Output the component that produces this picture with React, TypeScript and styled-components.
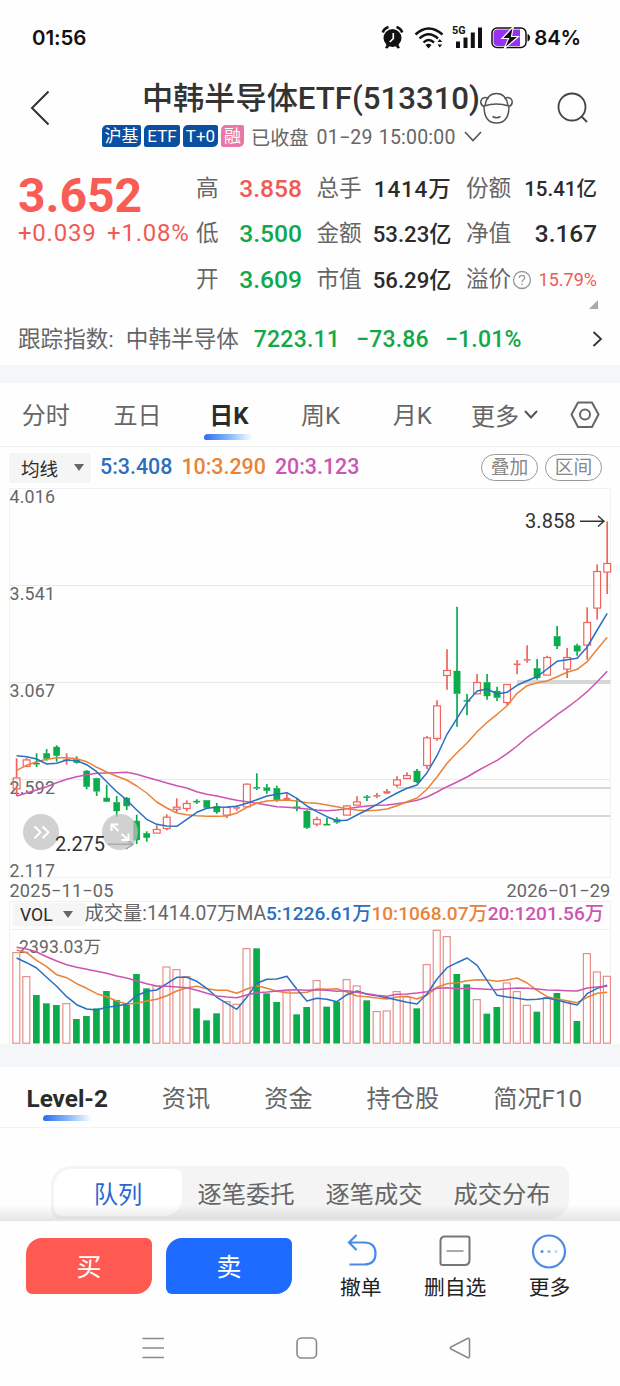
import React from "react";
import styled, { createGlobalStyle } from "styled-components";

const RED = "#ef5b54";
const GREEN = "#12a84a";
const BLUE = "#2a6fc0";
const ORANGE = "#e8833a";
const PINK = "#cb55b0";
const GREY = "#666";
const DARK = "#2b2b2b";

const GlobalStyle = createGlobalStyle`
  * { box-sizing: border-box; }
  html, body { margin: 0; background: #fefefe; }
  body { font-family: Roboto, "Noto Sans CJK SC", sans-serif; color: ${DARK}; }
  button { font: inherit; color: inherit; border: 0; background: none; padding: 0; }
  svg { display: block; flex: none; overflow: visible; }
`;

const Screen = styled.div`
  width: 620px;
  height: 1386px;
  overflow: hidden;
  display: flex;
  flex-direction: column;
  white-space: nowrap;
`;

const StatusBar = styled.div`
  height: 74px;
  padding: 0 39px 0 32px;
  display: flex;
  align-items: center;
  justify-content: space-between;
  font: 600 20.5px Inter, sans-serif;
  color: #111;
`;
const Clock = styled.span`letter-spacing: -0.1px;`;
const StatusIcons = styled.div`display: flex; align-items: center;`;
const Battery = styled.span`margin-left: 4px; letter-spacing: -0.2px;`;

const Header = styled.header`
  height: 91px;
  padding-left: 30px;
  display: flex;
`;
const BackButton = styled.button`width: 72px; height: 68px; display: flex; align-items: center;`;
const HeaderCenter = styled.div`
  width: 378px;
  display: flex;
  flex-direction: column;
`;
const Title = styled.h1`
  margin: 0;
  height: 50px;
  line-height: 50px;
  font-size: 31.2px;
  font-weight: 500;
  text-align: right;
  color: #333;
`;
const SubTitle = styled.div`
  display: flex;
  align-items: center;
  height: 24px;
  gap: 3px;
  font-size: 19.5px;
  color: ${GREY};
`;
const Badge = styled.span<{ $w: number; $pink?: boolean }>`
  flex: none;
  width: ${(p) => p.$w}px;
  height: 21.5px;
  line-height: 22.5px;
  text-align: center;
  border-radius: 5px 2px 5px 2px;
  font-size: 17px;
  color: #fff;
  background: ${(p) => (p.$pink ? "#e778a7" : "#0b50a0")};
`;
const MarketState = styled.span`margin: 1px 5px 0 4px; font-size: 19.2px;`;
const MarketTime = styled.span`margin: 2px 5px 0 0; letter-spacing: 0.22px; word-spacing: 1px;`;
const HeaderActions = styled.div`display: flex; height: 68px; align-items: center; gap: 43px;`;

const Quote = styled.section`
  height: 200px;
  padding: 0 18px;
`;
const QuoteTop = styled.div`display: flex; height: 137px;`;
const PriceBlock = styled.div`width: 178px; padding-top: 7px; color: ${RED};`;
const Price = styled.div`
  height: 48px;
  line-height: 48px;
  font-size: 48px;
  font-weight: 700;
  color: #f95c54;
`;
const Change = styled.div`
  line-height: 26px;
  font-size: 24px;
  letter-spacing: 0.75px;
  word-spacing: 4px;
`;
const StatGrid = styled.div`
  flex: 1;
  display: grid;
  grid-template-columns: 106px 135px 131px;
  grid-template-rows: repeat(3, 45.6px);
  column-gap: 14.5px;
  margin-top: 1px;
`;
const Stat = styled.div`display: flex; align-items: center; justify-content: space-between;`;
const StatLabel = styled.span`
  display: flex;
  align-items: center;
  font-size: 22.6px;
  line-height: 30px;
  color: ${GREY};
`;
const StatValue = styled.span<{ $c?: string; $s?: number; $ls?: number; $w?: number }>`
  font-size: ${(p) => p.$s ?? 22}px;
  line-height: 30px;
  font-weight: ${(p) => p.$w ?? 500};
  letter-spacing: ${(p) => p.$ls ?? 0}px;
  color: ${(p) => p.$c ?? DARK};
`;
const Corner = styled.div`
  height: 9px;
  margin: -2px 4px 0 auto;
  width: 9px;
  border-style: solid;
  border-width: 0 0 9px 9px;
  border-color: transparent transparent #aaa transparent;
`;
const IndexRow = styled.div`
  height: 57px;
  display: flex;
  align-items: center;
  font-size: 22.6px;
  color: ${GREY};
`;
const IndexName = styled.span`margin: 0 15px 0 12px;`;
const IndexNum = styled.span`
  margin: 3px 16px 0 0;
  font-weight: 500;
  font-size: 23px;
  letter-spacing: 0.2px;
  color: ${GREEN};
`;
const IndexArrow = styled.span`margin: 3px -2px 0 auto;`;

const Divider = styled.div<{ $h: number }>`height: ${(p) => p.$h}px; background: #f4f6f8;`;

const PeriodTabs = styled.nav`
  height: 64px;
  display: flex;
  border-bottom: 1px solid #eceeef;
`;
const PeriodTab = styled.button<{ $active?: boolean }>`
  width: 91.6px;
  height: 64px;
  display: flex;
  flex-direction: column;
  align-items: center;
  padding-top: 16px;
  line-height: 34px;
  font-size: 24px;
  font-weight: ${(p) => (p.$active ? 700 : 400)};
  color: ${(p) => (p.$active ? DARK : GREY)};
`;
const Underline = styled.i<{ $up?: number }>`
  width: 49px;
  height: 6px;
  margin-top: ${(p) => 1 - (p.$up ?? 0)}px;
  border-radius: 4px 2px 2px 2px;
  background: linear-gradient(90deg, #2b6cf0, #8cc0f8 55%, #fff);
`;
const MoreTab = styled.button`
  margin-left: 13px;
  width: 99px;
  height: 62px;
  display: flex;
  align-items: center;
  gap: 5px;
  font-size: 24px;
  color: ${GREY};
`;

const MaRow = styled.div`
  height: 41px;
  padding: 0 18px 0 9px;
  display: flex;
  align-items: center;
`;
const Select = styled.button<{ $w: number; $h: number; $s: number; $pad?: number }>`
  width: ${(p) => p.$w}px;
  height: ${(p) => p.$h}px;
  display: flex;
  align-items: center;
  justify-content: space-between;
  padding: 0 7px 0 ${(p) => p.$pad ?? 12}px;
  border-radius: 2px;
  background: #f5f5f5;
  font-size: ${(p) => p.$s}px;
  color: ${DARK};
`;
const Triangle = styled.i<{ $r?: number }>`
  border: solid transparent;
  border-width: 7px 5.5px 0;
  border-top-color: #666;
  margin-right: ${(p) => p.$r ?? 0}px;
`;
const MaValue = styled.span<{ $c: string }>`
  margin: -2px 0 0 9px;
  font-size: 21.4px;
  font-weight: 500;
  color: ${(p) => p.$c};
`;
const Pills = styled.div`display: flex; gap: 7px; margin-left: auto;`;
const Pill = styled.button`
  width: 57px;
  height: 27px;
  line-height: 27px;
  border: 1px solid #999;
  border-radius: 14px;
  font-size: 18.8px;
  color: #888;
`;

const ChartBlock = styled.div`height: 390px;`;
const DateRow = styled.div`
  height: 23px;
  padding: 1px 9.5px 0;
  display: flex;
  justify-content: space-between;
  align-items: center;
  font-size: 18.2px;
  letter-spacing: 0.15px;
  color: ${GREY};
`;
const VolHeader = styled.div`
  height: 29px;
  margin: 0 9px;
  padding: 0 0 2px 3px;
  border: 1px solid #f0f0f0;
  display: flex;
  align-items: center;
  font-size: 19.3px;
  line-height: 24px;
  color: ${GREY};
`;
const VolTotal = styled.span`margin: -1px 0 0 -1.5px;`;
const VolAverage = styled.span<{ $c: string }>`
  margin-top: -1px;
  font-weight: 500;
  font-size: 19.1px;
  color: ${(p) => p.$c};
`;
const VolumeBlock = styled.div`height: 114px;`;

const InfoTabs = styled.nav`
  height: 61px;
  padding-left: 26.5px;
  display: flex;
  border-bottom: 1px solid #f2f2f2;
`;
const InfoTab = styled.button<{ $active?: boolean }>`
  margin-right: 54px;
  height: 60px;
  padding-top: 15px;
  line-height: 34px;
  display: flex;
  flex-direction: column;
  align-items: center;
  font-size: ${(p) => (p.$active ? 24.3 : 24.2)}px;
  font-weight: ${(p) => (p.$active ? 700 : 400)};
  color: ${(p) => (p.$active ? DARK : GREY)};
`;
const Panel = styled.section`
  position: relative;
  height: 93px;
  padding: 38px 51px 0;
  overflow: hidden;
`;
const Segments = styled.div`
  height: 53px;
  padding: 3px;
  display: flex;
  border-radius: 20px 9px 20px 9px;
  background: #f4f4f4;
`;
const Segment = styled.button<{ $active?: boolean }>`
  flex: 1;
  height: 47px;
  line-height: 51px;
  border-radius: 18px 8px 18px 8px;
  background: ${(p) => (p.$active ? "#fff" : "none")};
  color: ${(p) => (p.$active ? "#2a68d0" : GREY)};
  font-size: 24.3px;
`;
const PanelShade = styled.div`
  position: absolute;
  left: 0;
  right: 0;
  bottom: 0;
  height: 16px;
  background: linear-gradient(transparent, rgba(0, 0, 0, 0.1));
`;

const TradeBar = styled.footer`
  height: 89px;
  padding: 16.5px 0 0 26px;
  display: flex;
`;
const TradeButton = styled.button<{ $bg: string }>`
  width: 126px;
  height: 56.5px;
  margin-right: 14px;
  border-radius: 16px 6px 16px 6px;
  background: ${(p) => p.$bg};
  color: #fff;
  font-size: 25px;
  line-height: 60px;
`;
const Actions = styled.div`
  display: grid;
  grid-template-columns: repeat(3, 94.4px);
  margin: -4.5px 0 0 7.5px;
`;
const Action = styled.button`
  display: flex;
  flex-direction: column;
  align-items: center;
  gap: 5px;
  line-height: 28px;
  font-size: 20.8px;
  color: #222;
`;
const SystemNav = styled.div`
  height: 76px;
  padding: 0 149px 0 141px;
  display: flex;
  align-items: center;
  justify-content: space-between;
`;

/* Each candle: kind (h hollow red, r solid red, g green), body top, body bottom, high, low */
type Candle = [string, number, number, number, number];
const candles: Candle[] = [
  ["h", 777.7, 789, 758.3, 796], ["h", 759.7, 766.7, 757.7, 767], ["g", 763, 764.3, 753.3, 767],
  ["g", 753.3, 758.7, 749, 760.7], ["g", 747, 755.7, 745.3, 761.7], ["r", 759.6, 761, 753.3, 764.7],
  ["g", 759.7, 762.7, 756.3, 763.7], ["g", 771, 786.7, 770, 789.3], ["g", 778.3, 791.3, 777.7, 796],
  ["g", 798, 801.7, 784.7, 801.7], ["g", 802.3, 811, 796, 816.7], ["g", 798, 806, 797, 810],
  ["g", 821, 840, 814.7, 844], ["g", 833.3, 837.7, 831.3, 841.7], ["h", 829.3, 833.3, 825.3, 833.3],
  ["h", 817, 828.7, 814.3, 830.3], ["h", 807, 809.5, 798.3, 812], ["h", 803.3, 808.7, 800.3, 811.3],
  ["g", 801, 802.2, 799.3, 804], ["g", 800.3, 807.7, 800.3, 807.7], ["g", 806.3, 812, 803, 813.7],
  ["h", 807.3, 815.3, 807.3, 818], ["r", 807.3, 808.5, 805.3, 810.7], ["h", 784, 807, 783.5, 807],
  ["g", 787.2, 788.4, 773.3, 790], ["g", 787.7, 790.7, 784, 793.7], ["g", 788.3, 800.3, 785.7, 801.7],
  ["r", 798, 800, 793.7, 800.5], ["g", 806.7, 808.2, 798.3, 811.3], ["g", 811, 827.7, 810.3, 829],
  ["h", 819.3, 824.3, 816.7, 826.3], ["g", 824, 825.2, 818, 825.3], ["g", 819.3, 822.3, 817.3, 823.7],
  ["h", 805.7, 815.3, 805, 815.3], ["h", 801.7, 805.3, 796.3, 805.3], ["g", 796.6, 797.8, 795, 801],
  ["r", 795.2, 796.4, 793, 798], ["r", 791.3, 793.3, 789, 794], ["h", 779.7, 785.3, 776.3, 787.3],
  ["h", 775.3, 778.7, 772.3, 778.7], ["g", 771, 782, 769, 783.3], ["h", 737.7, 765.7, 736, 769],
  ["h", 705.7, 738.7, 700.3, 740.7], ["h", 670.3, 675.7, 649.3, 689.7], ["g", 671, 693.7, 606.7, 726.7],
  ["g", 700.2, 701.4, 694, 715.3], ["h", 682.3, 694, 674, 694], ["g", 682.3, 696, 674, 699.7],
  ["g", 691, 697.7, 686.7, 701], ["h", 684.3, 702.7, 684, 705.3], ["r", 663.8, 665, 660, 674.3],
  ["r", 659.2, 660.4, 645.3, 662.7], ["g", 668.3, 678, 659, 679.7], ["h", 657.3, 675.3, 655.7, 675.3],
  ["g", 636.3, 646, 626, 649], ["h", 657.3, 669.3, 648, 678], ["g", 645.7, 651.3, 643.7, 655.7],
  ["h", 622.3, 645.3, 607.3, 659.7], ["h", 571.3, 608.3, 564.3, 619.7], ["h", 563.3, 572.3, 521.3, 594],
];

const ma5 = [755.7, 756.7, 759, 764, 763.3, 760, 760.7, 764.7, 771.7, 781.7, 791.7, 800, 810, 819.3, 824.3, 826, 826.3, 819.3, 812.3, 808.3, 807.3, 807, 806.3, 803.3, 799.7, 796, 794.3, 792.7, 798.3, 806, 811.7, 816.7, 820.7, 820.3, 815, 810, 804.3, 798.3, 793, 788.2, 785, 772.7, 755.7, 734.3, 718.3, 702.3, 691, 689, 694, 692.3, 685.3, 680.7, 676.7, 669, 661.3, 659.7, 658.3, 647, 630, 613.3];
const ma10 = [770.3, 765.3, 761.7, 759.3, 757.7, 757.7, 758.7, 761.7, 767.3, 772, 776.3, 780, 786, 793, 802, 808, 813, 814.7, 815.7, 816.3, 816.3, 816, 813, 807.3, 803.3, 801, 800.3, 800, 801, 802.7, 803.3, 805, 806.7, 808.7, 810, 810.7, 810.3, 809, 805.7, 801.7, 798, 789.3, 777, 763.3, 752.7, 743, 731.7, 722.3, 714.3, 705.7, 693.3, 685.7, 682.7, 681, 676.7, 672.3, 669.3, 661.7, 649.3, 637.3];
const ma20 = [796, 793, 790, 786.7, 782.7, 779.3, 776.7, 774.7, 773.3, 773, 772.7, 772.3, 774.3, 777.3, 780, 783, 785.7, 788, 791.7, 794.3, 796, 798.3, 800.3, 801.7, 803.3, 805, 806.7, 807.3, 808, 809, 810, 810.7, 810, 808.7, 807.3, 806, 805.3, 805, 803.7, 802.3, 800.3, 797, 792, 786.7, 782, 777, 771, 765.7, 760.3, 753.7, 746, 737.3, 730, 722.3, 714.7, 707.7, 700, 691.7, 681.7, 671.3];

/* Volume series are stored in thirds of a pixel */
const volumes = [247, 319, 375, 400, 405, 400, 447, 438, 415, 363, 390, 403, 312, 355, 347, 290, 298, 319, 415, 451, 430, 394, 402, 235, 235, 370, 396, 362, 433, 411, 331, 410, 395, 328, 347, 391, 424, 422, 364, 380, 415, 283, 180, 199, 312, 343, 388, 431, 411, 338, 364, 405, 425, 382, 369, 396, 453, 250, 305, 318];
const vol5 = [264, 278, 294, 322, 349, 380, 404, 417, 420, 412, 408, 402, 377, 364, 360, 341, 322, 322, 334, 355, 382, 400, 418, 382, 340, 328, 327, 319, 358, 393, 385, 388, 395, 374, 363, 373, 377, 383, 390, 397, 402, 372, 327, 293, 278, 264, 286, 332, 376, 381, 385, 389, 388, 384, 390, 398, 405, 371, 355, 346];
const vol10 = [240, 248, 271, 290, 314, 323, 341, 355, 371, 380, 393, 402, 400, 393, 388, 377, 363, 353, 349, 356, 361, 361, 370, 357, 347, 355, 364, 368, 369, 367, 357, 358, 356, 366, 378, 380, 384, 387, 381, 379, 387, 375, 352, 341, 338, 332, 329, 330, 334, 330, 324, 339, 361, 380, 387, 392, 398, 382, 370, 367];
const vol20 = [232, 237, 246, 260, 273, 284, 292, 298, 304, 310, 318, 324, 333, 341, 348, 349, 351, 353, 361, 370, 378, 381, 383, 375, 368, 366, 363, 360, 359, 361, 359, 361, 364, 362, 367, 371, 376, 379, 373, 372, 369, 365, 355, 353, 356, 355, 356, 358, 359, 356, 354, 355, 357, 360, 361, 362, 363, 354, 351, 349];
const greenBars = new Set([2, 3, 4, 6, 7, 8, 9, 10, 11, 12, 13, 18, 19, 20, 24, 25, 26, 28, 29, 31, 32, 35, 40, 44, 45, 47, 48, 52, 54, 56]);

const cx = (i: number) => 16.6 + i * 10.01;
const line = (v: number[], f: (n: number) => number = (n) => n) =>
  v.map((y, i) => `${cx(i).toFixed(1)},${f(y).toFixed(1)}`).join(" ");

const Line = ({ points, color }: { points: string; color: string }) => (
  <polyline points={points} fill="none" stroke={color} strokeWidth={1.5} strokeLinejoin="round" />
);

const axis: [string, number][] = [["4.016", 503.3], ["3.541", 600], ["3.067", 696.7], ["2.592", 793.5], ["2.117", 877]];

function PriceChart() {
  return (
    <svg width="620" height="390" viewBox="0 488 620 390" fontFamily="Roboto, sans-serif">
      <path d="M9.5 488.5H610.5V877.5H9.5Z" fill="none" stroke="#f1f1f1" />
      <path d="M10 585.5H610M10 682.5H610M10 779.5H610" stroke="#e9e9e9" />
      <path d="M517 682H610.5" stroke="#d6d8d8" strokeWidth="4" />
      <path d="M397 788H610.5M360 816H610.5" stroke="#d6d8d8" strokeWidth="2" />
      <g fill={GREY} fontSize="17.8">
        {axis.map(([t, y]) => (
          <text key={t} x="9.5" y={y} textLength="45.5">{t}</text>
        ))}
      </g>
      {candles.map(([k, t, b, h, l], i) => {
        const x = cx(i);
        const c = k === "g" ? "#0bac4c" : "#f0645c";
        return (
          <g key={i} stroke={c} fill={k === "h" ? "none" : c}>
            {h < t && <path d={`M${x} ${h}V${t}`} strokeWidth="1.7" />}
            {l > b && <path d={`M${x} ${b}V${l}`} strokeWidth="1.7" />}
            {k === "h" ? (
              <rect x={x - 3.4} y={t + 0.2} width="6.8" height={Math.max(b - t - 0.4, 1)} strokeWidth="1.2" />
            ) : (
              <rect x={x - 3.2} y={t} width="6.4" height={b - t} strokeWidth="0.3" />
            )}
          </g>
        );
      })}
      <Line points={line(ma20)} color={PINK} />
      <Line points={line(ma10)} color={ORANGE} />
      <Line points={line(ma5)} color={BLUE} />
      <g fill="none" stroke="#333" strokeWidth="1.4">
        <path d="M580 521.3H604M598 516L604 521.3L598 526.6" />
        <path d="M108 844.3H132M126 839.5L133 844.3L126 849" stroke="#777" />
      </g>
      <text x="525" y="528" fontSize="20" textLength="50.5" fill="#333">3.858</text>
      <g fill="#bfbfbf" fillOpacity="0.72">
        <circle cx="41" cy="832" r="18" />
        <circle cx="120" cy="832" r="18" />
      </g>
      <text x="55" y="850.5" fontSize="20" textLength="50" fill="#333">2.275</text>
      <g fill="none" stroke="#fff" strokeWidth="2">
        <path d="M34.5 826.5L40.5 832.3L34.5 838.2M42.5 826.5L48.5 832.3L42.5 838.2" />
        <path d="M111.5 831V824.5H118.5M111.5 824.5L118.5 831M121.5 834L128.5 840M128.5 833.5V840H121.5" />
      </g>
    </svg>
  );
}

function VolumeChart() {
  const y = (n: number) => 870 + n / 3;
  return (
    <svg width="620" height="114" viewBox="0 930 620 114" fontFamily='Roboto, "Noto Sans CJK SC", sans-serif'>
      <path d="M9.5 930V1044M610.5 930V1044" stroke="#f1f1f1" />
      {volumes.map((v, i) => {
        const x = cx(i) - 0.4;
        return greenBars.has(i) ? (
          <rect key={i} x={x - 3.2} y={y(v)} width="6.7" height={1043.5 - y(v)} fill="#0bac4c" />
        ) : (
          <rect key={i} x={x - 3.4} y={y(v) + 0.3} width="7" height={1042.9 - y(v)} fill="none" stroke="#e58782" strokeWidth="1.1" />
        );
      })}
      <text x="19" y="953" fontSize="17.5" textLength="82" fill={GREY}>2393.03万</text>
      <Line points={line(vol10, y)} color={ORANGE} />
      <Line points={line(vol5, y)} color={BLUE} />
      <Line points={line(vol20, y)} color={PINK} />
    </svg>
  );
}

const StatusGlyphs = () => (
  <svg width="149" height="24" viewBox="0 0 149 24">
    <g fill="#111">
      <circle cx="11.5" cy="13" r="9" />
      <path d="M4 23L6 19L8.5 21L6.5 23.5ZM19 23L17 19L14.5 21L16.5 23.5Z" />
    </g>
    <path d="M1.8 7.5Q3.2 3.2 7.5 2M21.2 7.5Q19.8 3.2 15.5 2" fill="none" stroke="#111" strokeWidth="2.6" />
    <path d="M12.3 8V13.5L8.8 17" fill="none" stroke="#fff" strokeWidth="1.7" />
    <path d="M34.5 9.5Q47.5 -2.5 61.5 9.5M38.5 13.5Q47.5 5 57 13.5M42.5 17.5Q47.5 12.5 53 17.5" fill="none" stroke="#111" strokeWidth="2.4" />
    <path d="M44.5 20Q47.5 17.5 50.5 20L47.5 23.5ZM56.5 17L58.8 14L61.2 17ZM56.5 19.5L58.8 22.5L61.2 19.5Z" fill="#111" />
    <text x="71" y="9" fontSize="11" fontWeight="700" textLength="13.5" lengthAdjust="spacingAndGlyphs" fontFamily="Roboto, sans-serif" fill="#111">5G</text>
    <path d="M77 23V16.5M84.5 23V12.5M91.8 23V7.5M99 23V2.5" stroke="#111" strokeWidth="4" />
    <rect x="111" y="3" width="34" height="19.5" rx="5" fill="#fff" stroke="#111" strokeWidth="1.5" />
    <path d="M117 4.5H139V21H117Q112.5 21 112.5 17V8.5Q112.5 4.5 117 4.5Z" fill="#9b30f5" />
    <path d="M146.5 9Q149 9.5 149 12.8Q149 16 146.5 16.5Z" fill="#111" />
    <path d="M132.5 1.5L121 13.5H127.5L123 24L137.5 11.5H130.5Z" fill="#111" stroke="#fff" strokeWidth="1.2" />
  </svg>
);

const Chevron = ({ w, h, c = "#555", sw = 1.6 }: { w: number; h: number; c?: string; sw?: number }) => (
  <svg width={w} height={h} fill="none" stroke={c} strokeWidth={sw}>
    <path d={`M1 1L${w / 2} ${h - 1.5}L${w - 1} 1`} />
  </svg>
);

const maPairs: [string, string][] = [["5:3.408", BLUE], ["10:3.290", ORANGE], ["20:3.123", PINK]];

export default function App() {
  return (
    <Screen>
      <GlobalStyle />
      <StatusBar>
        <Clock>01:56</Clock>
        <StatusIcons>
          <StatusGlyphs />
          <Battery>84%</Battery>
        </StatusIcons>
      </StatusBar>

      <Header>
        <BackButton>
          <svg width="20" height="36" fill="none" stroke="#333" strokeWidth="2">
            <path d="M18.5 1.5L2 18L18.5 34.5" />
          </svg>
        </BackButton>
        <HeaderCenter>
          <Title>中韩半导体ETF(513310)</Title>
          <SubTitle>
            <Badge $w={39}>沪基</Badge>
            <Badge $w={36}>ETF</Badge>
            <Badge $w={35}>T+0</Badge>
            <Badge $w={23} $pink>融</Badge>
            <MarketState>已收盘</MarketState>
            <MarketTime>01−29 15:00:00</MarketTime>
            <Chevron w={18} h={11} />
          </SubTitle>
        </HeaderCenter>
        <HeaderActions>
          <svg width="34" height="34" fill="none" stroke="#555" strokeWidth="1.5">
            <path d="M4 15Q4 32 16.5 32Q29 32 29 15M4 15Q16.5 11 29 15M5 14.5Q7 2.5 16.5 2.5Q26 2.5 28 14.5M12.5 25.5Q16.5 28 20.5 25.5" />
            <path d="M4 15.5Q0 14 1 9.5Q3 5 8.5 7.5M29 15.5Q33 14 32 9.5Q30 5 24.5 7.5" />
          </svg>
          <svg width="32" height="32" fill="none" stroke="#444" strokeWidth="1.8">
            <circle cx="15" cy="15" r="13.5" />
            <path d="M24.5 24.5L30 30" />
          </svg>
        </HeaderActions>
      </Header>

      <Quote>
        <QuoteTop>
          <PriceBlock>
            <Price>3.652</Price>
            <Change>+0.039 +1.08%</Change>
          </PriceBlock>
          <StatGrid>
            <Stat><StatLabel>高</StatLabel><StatValue $c={RED} $s={24.6}>3.858</StatValue></Stat>
            <Stat><StatLabel>总手</StatLabel><StatValue $s={22.5} $ls={0.8}>1414万</StatValue></Stat>
            <Stat><StatLabel>份额</StatLabel><StatValue $s={20.5}>15.41亿</StatValue></Stat>
            <Stat><StatLabel>低</StatLabel><StatValue $c={GREEN} $s={24.6}>3.500</StatValue></Stat>
            <Stat><StatLabel>金额</StatLabel><StatValue $s={22.2}>53.23亿</StatValue></Stat>
            <Stat><StatLabel>净值</StatLabel><StatValue $s={24.4}>3.167</StatValue></Stat>
            <Stat><StatLabel>开</StatLabel><StatValue $c={GREEN} $s={24.6}>3.609</StatValue></Stat>
            <Stat><StatLabel>市值</StatLabel><StatValue $s={22.2}>56.29亿</StatValue></Stat>
            <Stat>
              <StatLabel>
                溢价
                <svg width="20" height="20" fill="none" stroke="#999" strokeWidth="1.3">
                  <circle cx="11" cy="10" r="8.5" />
                  <path d="M8.3 8Q8.5 5.3 11 5.3Q13.7 5.3 13.7 7.8Q13.7 9 12.2 10Q11 10.8 11 12.3M11 13.5V15" />
                </svg>
              </StatLabel>
              <StatValue $c={RED} $s={18} $w={400}>15.79%</StatValue>
            </Stat>
          </StatGrid>
        </QuoteTop>
        <Corner />
        <IndexRow>
          跟踪指数:
          <IndexName>中韩半导体</IndexName>
          <IndexNum>7223.11</IndexNum>
          <IndexNum>−73.86</IndexNum>
          <IndexNum>−1.01%</IndexNum>
          <IndexArrow>
            <svg width="12" height="16" fill="none" stroke="#333" strokeWidth="1.8">
              <path d="M1.5 1L9 8L1.5 15" />
            </svg>
          </IndexArrow>
        </IndexRow>
      </Quote>

      <Divider $h={18} />
      <PeriodTabs>
        <PeriodTab>分时</PeriodTab>
        <PeriodTab>五日</PeriodTab>
        <PeriodTab $active>日K<Underline /></PeriodTab>
        <PeriodTab>周K</PeriodTab>
        <PeriodTab>月K</PeriodTab>
        <MoreTab>更多<Chevron w={14} h={9} sw={2} /></MoreTab>
        <svg width="30" height="63" fill="none" stroke="#666" strokeWidth="2">
          <path d="M8 19.5H22L28.5 31.5L22 44H8L1.5 31.5Z" strokeLinejoin="round" />
          <circle cx="15" cy="31.5" r="5" />
        </svg>
      </PeriodTabs>

      <MaRow>
        <Select $w={82} $h={30} $s={18.6}>均线<Triangle /></Select>
        {maPairs.map(([t, c]) => <MaValue key={t} $c={c}>{t}</MaValue>)}
        <Pills><Pill>叠加</Pill><Pill>区间</Pill></Pills>
      </MaRow>
      <ChartBlock><PriceChart /></ChartBlock>
      <DateRow><span>2025−11−05</span><span>2026−01−29</span></DateRow>
      <VolHeader>
        <Select $w={73} $h={23} $s={17.6} $pad={7}>VOL<Triangle $r={6} /></Select>
        <VolTotal>成交量:1414.07万MA</VolTotal>
        <VolAverage $c={BLUE}>5:1226.61万</VolAverage>
        <VolAverage $c={ORANGE}>10:1068.07万</VolAverage>
        <VolAverage $c={PINK}>20:1201.56万</VolAverage>
      </VolHeader>
      <VolumeBlock><VolumeChart /></VolumeBlock>

      <Divider $h={23} />
      <InfoTabs>
        <InfoTab $active>Level-2<Underline $up={2} /></InfoTab>
        <InfoTab>资讯</InfoTab>
        <InfoTab>资金</InfoTab>
        <InfoTab>持仓股</InfoTab>
        <InfoTab>简况F10</InfoTab>
      </InfoTabs>
      <Panel>
        <Segments>
          <Segment $active>队列</Segment>
          <Segment>逐笔委托</Segment>
          <Segment>逐笔成交</Segment>
          <Segment>成交分布</Segment>
        </Segments>
        <PanelShade />
      </Panel>

      <TradeBar>
        <TradeButton $bg="#ff5a52">买</TradeButton>
        <TradeButton $bg="#1e6bff">卖</TradeButton>
        <Actions>
          <Action>
            <svg width="34" height="36" viewBox="0 0 34 36" fill="none" stroke="#4c8ae8" strokeWidth="2.2">
              <path d="M12.5 2L5 9.5L12.5 17M5 9.5H20Q31.5 9.5 31.5 20.5Q31.5 31.5 20 31.5H5.5" />
            </svg>
            撤单
          </Action>
          <Action>
            <svg width="34" height="36" viewBox="0 0 34 36" fill="none" stroke="#777" strokeWidth="2">
              <path d="M7 3.5H29.5Q31.5 3.5 31.5 5.5V27Q31.5 32 26.5 32H4.5Q2.5 32 2.5 30V8Q2.5 3.5 7 3.5Z" />
              <path d="M8.5 18H25.5" stroke="#aaa" />
            </svg>
            删自选
          </Action>
          <Action>
            <svg width="36" height="36" viewBox="0 0 36 36">
              <circle cx="18" cy="18.5" r="16" fill="none" stroke="#4c8ae8" strokeWidth="2.2" />
              <circle cx="11" cy="18.5" r="1.6" fill="#5b93ea" />
              <circle cx="18" cy="18.5" r="1.6" fill="#8db4f0" />
              <circle cx="25" cy="18.5" r="1.6" fill="#c5d9f7" />
            </svg>
            更多
          </Action>
        </Actions>
      </TradeBar>
      <SystemNav>
        <svg width="24" height="24" stroke="#8a8a8a" strokeWidth="1.6"><path d="M1.5 2.5H23M1.5 12H23M1.5 21.5H23" /></svg>
        <svg width="24" height="24" fill="none" stroke="#8a8a8a" strokeWidth="1.6"><rect x="2" y="2" width="19.5" height="20" rx="4.5" /></svg>
        <svg width="22" height="24" fill="none" stroke="#8a8a8a" strokeWidth="1.6" strokeLinejoin="round"><path d="M18.5 2.5Q20.5 1.5 20.5 4V20Q20.5 22.5 18.5 21.5L2 13Q0.5 12 2 11Z" /></svg>
      </SystemNav>
    </Screen>
  );
}
